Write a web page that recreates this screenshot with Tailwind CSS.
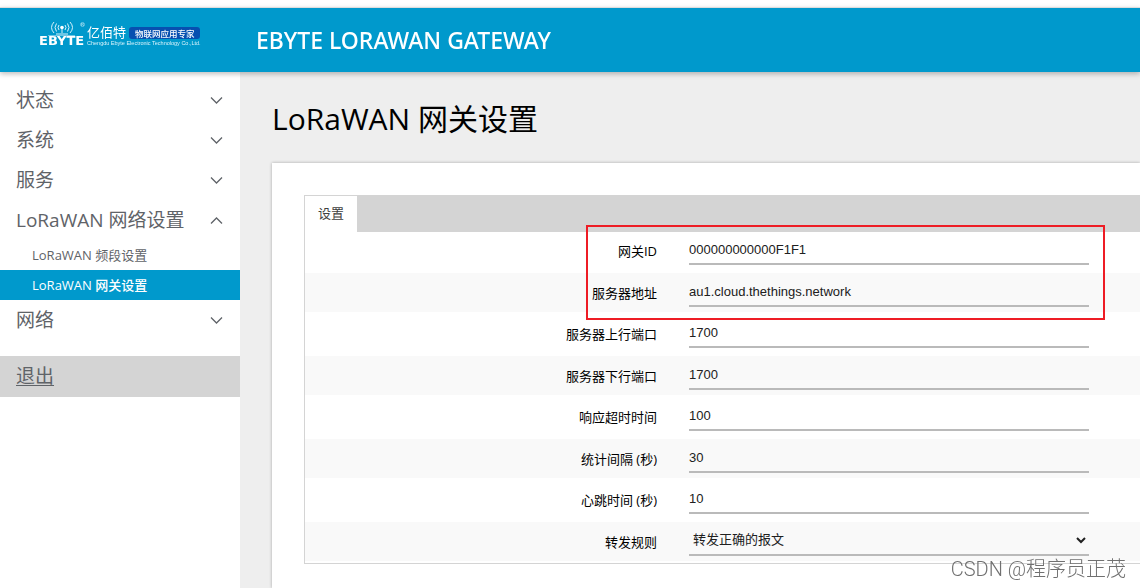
<!DOCTYPE html>
<html lang="zh-CN">
<head>
<meta charset="utf-8">
<title>EBYTE LORAWAN GATEWAY</title>
<script src="https://cdn.jsdelivr.net/npm/@tailwindcss/browser@4"></script>
</head>
<body class="flex h-screen flex-col overflow-hidden bg-[#eeeeee] pt-[7px] font-['Open_Sans','Noto_Sans_CJK_SC',sans-serif] before:fixed before:inset-x-0 before:top-0 before:h-[7px] before:bg-white">
<header class="z-10 flex h-[65px] shrink-0 items-center border-t border-[#dddddd] bg-[#0099cc] text-white shadow-[0_2px_5px_rgba(0,0,0,0.26)]">
  <a href="#" aria-label="EBYTE" class="w-64 shrink-0 pl-[38px]">
    <svg width="164" height="28" viewBox="0 0 164 28" fill="none" class="mb-3 block">
      <g stroke="#d9f3fb" stroke-width="1">
        <path d="M21 5q-2 2.500 0 5M18.500 3.500q-3 4 0 8M16 2q-5 5.500 0 11M27 5q2 2.500 0 5M29.500 3.500q3 4 0 8M32 2q5 5.500 0 11"/>
        <path d="M24 8v5M18 14h12"/>
        <path d="M10 15.500h27" stroke-opacity="0.500"/>
      </g>
      <circle cx="24" cy="7.500" r="1.800" fill="#ffffff"/>
      <text x="1" y="25" fill="#ffffff" font-family="DejaVu Sans" font-weight="700" font-size="13">EBYTE</text>
      <circle cx="44.500" cy="4.500" r="2" stroke="#8fd2ea" stroke-width="0.700"/>
      <text x="43" y="6" fill="#d9f3fb" font-family="Liberation Sans" font-size="4">R</text>
      <text x="49" y="17" fill="#ffffff" font-family="Noto Sans CJK SC" font-size="13">亿佰特</text>
      <rect x="91" y="7" width="71" height="12" rx="3" fill="#0750b0"/>
      <text x="97" y="16.500" fill="#ffffff" font-family="Noto Sans CJK SC" font-weight="500" font-size="8.500">物联网应用专家</text>
      <text x="49" y="25" fill="#d9f3fb" font-family="Liberation Sans" font-size="5.500">Chengdu Ebyte Electronic Technology Co.,Ltd.</text>
    </svg>
  </a>
  <h1 class="font-['Noto_Sans',sans-serif] text-[23px] leading-8 font-medium whitespace-nowrap">EBYTE LORAWAN GATEWAY</h1>
</header>
<div class="flex min-h-0 grow">
  <nav class="w-60 shrink-0 bg-white pt-2 text-[19px] text-[#5f6368]">
    <button class="flex h-10 w-full items-center justify-between pr-[17px] pl-4">状态
      <svg width="13" height="8" viewBox="0 0 13 8" fill="none" stroke="currentColor" stroke-width="1.300"><path d="M1 1.500l5.500 5.500L12 1.500"/></svg></button>
    <button class="flex h-10 w-full items-center justify-between pr-[17px] pl-4">系统
      <svg width="13" height="8" viewBox="0 0 13 8" fill="none" stroke="currentColor" stroke-width="1.300"><path d="M1 1.500l5.500 5.500L12 1.500"/></svg></button>
    <button class="flex h-10 w-full items-center justify-between pr-[17px] pl-4">服务
      <svg width="13" height="8" viewBox="0 0 13 8" fill="none" stroke="currentColor" stroke-width="1.300"><path d="M1 1.500l5.500 5.500L12 1.500"/></svg></button>
    <button class="flex h-10 w-full items-center justify-between pr-[17px] pl-4">LoRaWAN 网络设置
      <svg width="13" height="8" viewBox="0 0 13 8" fill="none" stroke="currentColor" stroke-width="1.300"><path d="M1 7.500l5.500-5.500L12 7.500"/></svg></button>
    <a href="#" class="block pl-8 text-[13px] leading-[30px]">LoRaWAN 频段设置</a>
    <a href="#" class="block bg-[#0099cc] pl-8 text-[13px] leading-[30px] font-medium text-white">LoRaWAN 网关设置</a>
    <button class="flex h-10 w-full items-center justify-between pr-[17px] pl-4">网络
      <svg width="13" height="8" viewBox="0 0 13 8" fill="none" stroke="currentColor" stroke-width="1.300"><path d="M1 1.500l5.500 5.500L12 1.500"/></svg></button>
    <a href="#" class="mt-4 block bg-[#d4d4d4] pl-4 text-[19px] leading-[41px] underline underline-offset-2">退出</a>
  </nav>
  <main class="flex min-w-0 grow flex-col overflow-hidden pl-8">
    <h2 class="pt-[23px] pb-5 text-[30px] leading-[48px] text-black">LoRaWAN 网关设置</h2>
    <section class="grow bg-white pt-8 pl-8 shadow-[0_0_3px_rgba(0,0,0,0.3)]">
      <form class="relative border border-r-0 border-[#d4d4d4] pb-[2px] text-[13px] text-black">
        <div class="flex bg-[#d4d4d4]"><button type="button" class="bg-white px-[13px] pb-0.5 leading-[34px] text-[#404040]">设置</button></div>
        <div class="flex h-[41px] items-end gap-8 pb-2">
          <label for="gw" class="w-[352px] shrink-0 text-right leading-7">网关ID</label>
          <input id="gw" value="000000000000F1F1" class="h-[30px] w-[400px] shrink-0 border-b-2 border-[#bababa] bg-transparent font-['Liberation_Sans'] text-[#202020]">
        </div>
        <div class="flex h-[39px] items-end gap-8 bg-[#f9f9f9] pb-[5px]">
          <label for="addr" class="w-[352px] shrink-0 text-right leading-7">服务器地址</label>
          <input id="addr" value="au1.cloud.thethings.network" class="h-[30px] w-[400px] shrink-0 border-b-2 border-[#bababa] bg-transparent font-['Liberation_Sans'] text-[#202020]">
        </div>
        <div class="flex h-11 items-end gap-8 pb-2">
          <label for="up" class="w-[352px] shrink-0 text-right leading-7">服务器上行端口</label>
          <input id="up" value="1700" class="h-[30px] w-[400px] shrink-0 border-b-2 border-[#bababa] bg-transparent font-['Liberation_Sans'] text-[#202020]">
        </div>
        <div class="flex h-[39px] items-end gap-8 bg-[#f9f9f9] pb-[5px]">
          <label for="down" class="w-[352px] shrink-0 text-right leading-7">服务器下行端口</label>
          <input id="down" value="1700" class="h-[30px] w-[400px] shrink-0 border-b-2 border-[#bababa] bg-transparent font-['Liberation_Sans'] text-[#202020]">
        </div>
        <div class="flex h-11 items-end gap-8 pb-2">
          <label for="timeout" class="w-[352px] shrink-0 text-right leading-7">响应超时时间</label>
          <input id="timeout" value="100" class="h-[30px] w-[400px] shrink-0 border-b-2 border-[#bababa] bg-transparent font-['Liberation_Sans'] text-[#202020]">
        </div>
        <div class="flex h-[39px] items-end gap-8 bg-[#f9f9f9] pb-[5px]">
          <label for="stat" class="w-[352px] shrink-0 text-right leading-7">统计间隔 (秒)</label>
          <input id="stat" value="30" class="h-[30px] w-[400px] shrink-0 border-b-2 border-[#bababa] bg-transparent font-['Liberation_Sans'] text-[#202020]">
        </div>
        <div class="flex h-11 items-end gap-8 pb-2">
          <label for="beat" class="w-[352px] shrink-0 text-right leading-7">心跳时间 (秒)</label>
          <input id="beat" value="10" class="h-[30px] w-[400px] shrink-0 border-b-2 border-[#bababa] bg-transparent font-['Liberation_Sans'] text-[#202020]">
        </div>
        <div class="flex h-[39px] items-end gap-8 bg-[#f9f9f9] pb-[5px]">
          <label for="rule" class="w-[352px] shrink-0 text-right leading-7">转发规则</label>
          <select id="rule" class="h-8 w-[400px] shrink-0 border-b-2 border-[#bababa] bg-transparent text-[#202020]"><option>转发正确的报文</option></select>
        </div>
        <div class="pointer-events-none absolute top-[29px] left-[281px] h-[95px] w-[519px] border-2 border-[#ee1c25]"></div>
      </form>
    </section>
  </main>
</div>
<p class="fixed right-[14px] bottom-[5px] z-20 font-['Roboto','Noto_Sans_CJK_SC',sans-serif] text-[20px] leading-7 font-light text-[#707070]">CSDN @程序员正茂</p>
</body>
</html>
